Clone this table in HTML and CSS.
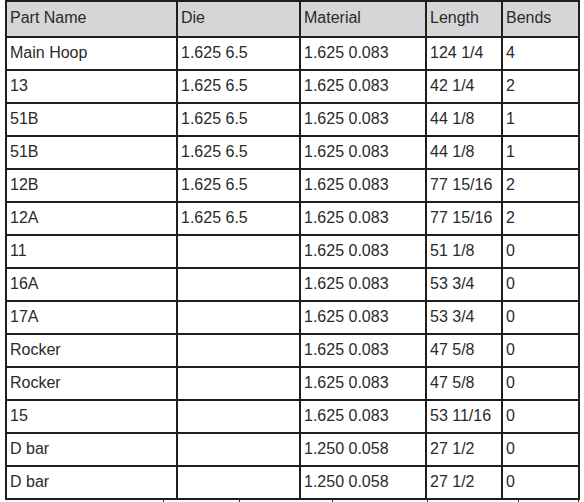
FILE: index.html
```html
<!DOCTYPE html>
<html>
<head>
<meta charset="utf-8">
<link rel="stylesheet" href="styles.css">
</head>
<body>
<div class="sheet">
<table class="parts">
<colgroup>
<col class="c-name"><col class="c-die"><col class="c-mat"><col class="c-len"><col class="c-bend">
</colgroup>
<thead>
<tr><th>Part Name</th><th>Die</th><th>Material</th><th>Length</th><th>Bends</th></tr>
</thead>
<tbody>
<tr><td>Main Hoop</td><td>1.625 6.5</td><td>1.625 0.083</td><td>124 1/4</td><td>4</td></tr>
<tr><td>13</td><td>1.625 6.5</td><td>1.625 0.083</td><td>42 1/4</td><td>2</td></tr>
<tr><td>51B</td><td>1.625 6.5</td><td>1.625 0.083</td><td>44 1/8</td><td>1</td></tr>
<tr><td>51B</td><td>1.625 6.5</td><td>1.625 0.083</td><td>44 1/8</td><td>1</td></tr>
<tr><td>12B</td><td>1.625 6.5</td><td>1.625 0.083</td><td>77 15/16</td><td>2</td></tr>
<tr><td>12A</td><td>1.625 6.5</td><td>1.625 0.083</td><td>77 15/16</td><td>2</td></tr>
<tr><td>11</td><td></td><td>1.625 0.083</td><td>51 1/8</td><td>0</td></tr>
<tr><td>16A</td><td></td><td>1.625 0.083</td><td>53 3/4</td><td>0</td></tr>
<tr><td>17A</td><td></td><td>1.625 0.083</td><td>53 3/4</td><td>0</td></tr>
<tr><td>Rocker</td><td></td><td>1.625 0.083</td><td>47 5/8</td><td>0</td></tr>
<tr><td>Rocker</td><td></td><td>1.625 0.083</td><td>47 5/8</td><td>0</td></tr>
<tr><td>15</td><td></td><td>1.625 0.083</td><td>53 11/16</td><td>0</td></tr>
<tr><td>D bar</td><td></td><td>1.250 0.058</td><td>27 1/2</td><td>0</td></tr>
<tr><td>D bar</td><td></td><td>1.250 0.058</td><td>27 1/2</td><td>0</td></tr>
</tbody>
</table>
<div class="next">
<span class="n1"></span><span class="n2"></span><span class="n3"></span><span class="n4"></span><span class="n5"></span><span class="n6"></span>
</div>
</div>
</body>
</html>
```
FILE: styles.css
```css
html, body {
  margin: 0;
  padding: 0;
  background: #ffffff;
}
body {
  width: 584px;
  height: 502px;
  overflow: hidden;
  font-family: "Liberation Sans", Arial, sans-serif;
  color: #2a2a2a;
}
.sheet {
  padding: 0 0 0 5px;
}
.parts {
  border-collapse: collapse;
  table-layout: fixed;
  width: 575px;
  font-size: 16px;
}
.c-name { width: 171px; }
.c-die { width: 123px; }
.c-mat { width: 126px; }
.c-len { width: 76px; }
.c-bend { width: 77px; }
.parts th, .parts td {
  border: 2px solid #1e1e1e;
  padding: 0 0 1px 3px;
  text-align: left;
  font-weight: normal;
  white-space: nowrap;
  overflow: hidden;
  vertical-align: middle;
}
.parts th {
  background: #d6d6d6;
  height: 31px;
  padding-bottom: 3px;
}
.parts td {
  height: 30px;
  background: #ffffff;
}
.next {
  display: flex;
  height: 6px;
  margin-left: 1px;
}
.next span {
  border-right: 1px solid #333;
  height: 6px;
}
.n1 { width: 157px; }
.n2 { width: 75px; }
.n3 { width: 92px; }
.n4 { width: 94px; }
.n5 { width: 90px; }
.n6 { width: 59px; }
```
